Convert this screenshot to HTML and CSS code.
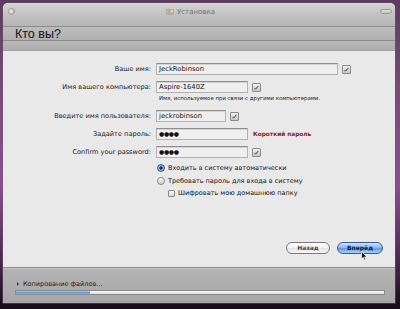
FILE: index.html
```html
<!DOCTYPE html>
<html lang="ru">
<head>
<meta charset="utf-8">
<title>Установка</title>
<link rel="stylesheet" href="styles.css">
</head>
<body>
<div class="desktop">
  <div class="window">
    <div class="titlebar">
      <span class="close-dot"></span>
      <div class="title">
        <svg class="title-icon" width="8" height="7" viewBox="0 0 8 7"><rect x="0.5" y="1.5" width="7" height="5" fill="#d8d8d8" stroke="#999" stroke-width="0.6"/><circle cx="3" cy="2.5" r="1.8" fill="#e8a040"/><rect x="1" y="4" width="6" height="2" fill="#b0b0b0"/></svg>
        <span>Установка</span>
      </div>
      <span class="pill"></span>
    </div>
    <div class="header"><h1>Кто вы?</h1></div>
    <div class="subbar"></div>
    <div class="content">
      <div class="form">
        <div class="row">
          <label class="lbl">Ваше имя:</label>
          <div class="field w182">JeckRobinson</div>
          <span class="chk"><svg width="5" height="5" viewBox="0 0 5 5"><path d="M0.6 3.9 L1.6 2.9 M1.6 4.2 L4.4 0.8" stroke="#222" stroke-width="0.9" fill="none"/></svg></span>
        </div>
        <div class="row">
          <label class="lbl">Имя вашего компьютера:</label>
          <div class="field w92">Aspire-1640Z</div>
          <span class="chk"><svg width="5" height="5" viewBox="0 0 5 5"><path d="M0.6 3.9 L1.6 2.9 M1.6 4.2 L4.4 0.8" stroke="#222" stroke-width="0.9" fill="none"/></svg></span>
        </div>
        <div class="hint">Имя, используемое при связи с другими компьютерами.</div>
        <div class="row">
          <label class="lbl">Введите имя пользователя:</label>
          <div class="field w70">jeckrobinson</div>
          <span class="chk"><svg width="5" height="5" viewBox="0 0 5 5"><path d="M0.6 3.9 L1.6 2.9 M1.6 4.2 L4.4 0.8" stroke="#222" stroke-width="0.9" fill="none"/></svg></span>
        </div>
        <div class="row">
          <label class="lbl">Задайте пароль:</label>
          <div class="field w92 dots">●●●●</div>
          <span class="warn">Короткий пароль</span>
        </div>
        <div class="row">
          <label class="lbl">Confirm your password:</label>
          <div class="field w92 dots">●●●●</div>
          <span class="chk"><svg width="5" height="5" viewBox="0 0 5 5"><path d="M0.6 3.9 L1.6 2.9 M1.6 4.2 L4.4 0.8" stroke="#222" stroke-width="0.9" fill="none"/></svg></span>
        </div>
        <div class="opt radio-row"><span class="radio on"></span><span>Входить в систему автоматически</span></div>
        <div class="opt radio-row"><span class="radio"></span><span>Требовать пароль для входа в систему</span></div>
        <div class="opt check-row"><span class="box"></span><span>Шифровать мою домашнюю папку</span></div>
      </div>
      <div class="buttons">
        <button class="btn">Назад</button>
        <button class="btn primary">Вперёд</button>
        <svg class="cursor" width="7" height="10" viewBox="0 0 7 10"><path d="M0.5 0.5 L0.5 8 L2.3 6.3 L3.6 9.3 L4.8 8.8 L3.5 5.9 L6 5.9 Z" fill="#111" stroke="#fff" stroke-width="0.7"/></svg>
      </div>
    </div>
    <div class="footer">
      <div class="status"><span class="tri"></span>Копирование файлов...</div>
      <div class="progress"><div class="fill" style="width: 20%"></div></div>
    </div>
  </div>
</div>
</body>
</html>
```

FILE: styles.css
```css
* { box-sizing: border-box; margin: 0; padding: 0; }
html, body { width: 400px; height: 309px; overflow: hidden; }
body {
  font-family: "DejaVu Sans", "Liberation Sans", sans-serif;
  background: #1c1020;
}
.desktop {
  width: 400px;
  height: 309px;
  padding: 3px 5px 0 3px;
  background:
    linear-gradient(180deg, #5b3c5e 0%, #7a4a7c 30%, #8a4f92 60%, #4a2650 85%, #1a0e1e 98%);
}
.window {
  width: 392px;
  height: 300px;
  display: flex;
  flex-direction: column;
  border-radius: 5px 5px 0 0;
  overflow: hidden;
  background: #e9e9e9;
  box-shadow: 0 0 0 0.5px #6a5a6a;
}
.titlebar {
  height: 24px;
  flex: none;
  display: flex;
  align-items: center;
  justify-content: space-between;
  padding: 0 3px 6px 5px;
  background: linear-gradient(180deg, #d4d4d4 0%, #c3c3c3 50%, #b6b6b6 100%);
  border-bottom: 1px solid #8d8d8d;
}
.close-dot {
  width: 7px;
  height: 7px;
  border-radius: 50%;
  background: radial-gradient(circle at 40% 35%, #f0f0f0, #c9c9c9 70%);
  border: 0.5px solid #a0a0a0;
  box-shadow: inset -1px 0 0 #d8b070;
}
.title {
  display: flex;
  align-items: center;
  gap: 3px;
  font-size: 7px;
  color: #707070;
  margin-left: -14px;
}
.pill {
  width: 12px;
  height: 5px;
  border-radius: 3px;
  border: 0.8px solid #9a9a9a;
  background: linear-gradient(180deg, #e0e0e0, #c0c0c0);
}
.header {
  height: 14px;
  flex: none;
  display: flex;
  align-items: center;
  padding-left: 12px;
  background: linear-gradient(180deg, #bcbcbc, #b0b0b0);
  border-bottom: 1px solid #8a8a8a;
}
.header h1 {
  font-family: "Liberation Sans", sans-serif;
  font-weight: normal;
  font-size: 12.5px;
  color: #111;
  line-height: 12px;
}
.subbar {
  height: 10px;
  flex: none;
  background: linear-gradient(180deg, #b9b9b9, #adadad);
  border-bottom: 1px solid #a0a0a0;
}
.content {
  flex: 1;
  display: flex;
  flex-direction: column;
  background: #e9e9e9;
  border-bottom: 1px solid #8e8e8e;
}
.form {
  padding-top: 12px;
  display: flex;
  flex-direction: column;
}
.row {
  display: flex;
  align-items: center;
  height: 12px;
  margin-bottom: 6px;
}
.lbl {
  width: 149px;
  text-align: right;
  padding-right: 1px;
  font-size: 6.6px;
  color: #1a1a1a;
  margin-right: 4px;
}
.field {
  height: 12px;
  border: 1px solid #b2b2b2;
  border-top-color: #8e8e8e;
  background: #efefef;
  box-shadow: inset 0 1px 0 #d4d4d4;
  font-size: 6.8px;
  line-height: 10px;
  padding-left: 2px;
  color: #111;
}
.w182 { width: 182px; }
.w92 { width: 92px; }
.w70 { width: 70px; }
.dots { font-size: 6px; letter-spacing: -0.3px; font-family: "DejaVu Sans", sans-serif; }
.chk {
  width: 9px;
  height: 9px;
  margin-left: 4px;
  display: flex;
  align-items: center;
  justify-content: center;
  border: 0.8px solid #8a8a8a;
  border-radius: 1px;
  background: linear-gradient(180deg, #f4f4f4, #c4c4c4);
}
.warn {
  margin-left: 5px;
  font-size: 5.8px;
  font-weight: bold;
  color: #8a1c24;
}
.hint {
  margin: -4px 0 9px 156px;
  font-size: 5.4px;
  color: #222;
  height: 6px;
  line-height: 6px;
}
.opt {
  display: flex;
  align-items: center;
  gap: 3px;
  font-size: 6.5px;
  color: #111;
  height: 8px;
}
.radio-row { margin: 0 0 5px 154px; }
.check-row { margin-left: 165px; margin-top: -1px; }
.radio {
  width: 8px;
  height: 8px;
  border-radius: 50%;
  border: 0.8px solid #888;
  background: linear-gradient(180deg, #fafafa, #d0d0d0);
}
.radio.on {
  background: radial-gradient(circle, #1a2a50 0 1.4px, #9cc0ea 1.8px, #4f86c8 100%);
  border-color: #3c5f92;
}
.box {
  width: 7px;
  height: 7px;
  border: 0.8px solid #8a8a8a;
  border-radius: 1px;
  background: linear-gradient(180deg, #fafafa, #d4d4d4);
}
.buttons {
  margin-top: auto;
  display: flex;
  justify-content: flex-end;
  gap: 7px;
  padding: 0 12px 13px 0;
  position: relative;
}
.btn {
  height: 12px;
  border-radius: 6px;
  font-family: "DejaVu Sans", sans-serif;
  font-size: 6px;
  font-weight: bold;
  line-height: 10px;
  color: #4a4a4a;
  width: 44px;
  border: 0.8px solid #7a7a7a;
  background: linear-gradient(180deg, #ffffff 0%, #f2f2f2 50%, #e2e2e2 51%, #f7f7f7 100%);
}
.btn.primary {
  width: 46px;
  color: #0c1c3a;
  border-color: #3a5a8a;
  background: linear-gradient(180deg, #cfe3fb 0%, #8db8ef 45%, #5d98e2 52%, #a8d0fa 100%);
}
.cursor {
  position: absolute;
  right: 27px;
  bottom: 6px;
}
.footer {
  height: 35px;
  flex: none;
  padding: 11px 10px 0 12px;
  background: linear-gradient(180deg, #b4b4b4, #a6a6a6);
  border-top: 1px solid #c4c4c4;
}
.status {
  display: flex;
  align-items: center;
  font-size: 6.5px;
  color: #1a1a1a;
  height: 8px;
  gap: 4px;
  padding-left: 2px;
}
.tri {
  width: 0;
  height: 0;
  border-left: 2.5px solid #333;
  border-top: 2px solid transparent;
  border-bottom: 2px solid transparent;
}
.progress {
  margin-top: 2px;
  width: 370px;
  height: 5px;
  border: 0.5px solid #8a8a8a;
  background: linear-gradient(180deg, #fafafa, #dcdcdc);
}
.fill {
  height: 100%;
  background: linear-gradient(180deg, #b8d6f6, #5c9ae0 50%, #8cbcf0);
}
```
